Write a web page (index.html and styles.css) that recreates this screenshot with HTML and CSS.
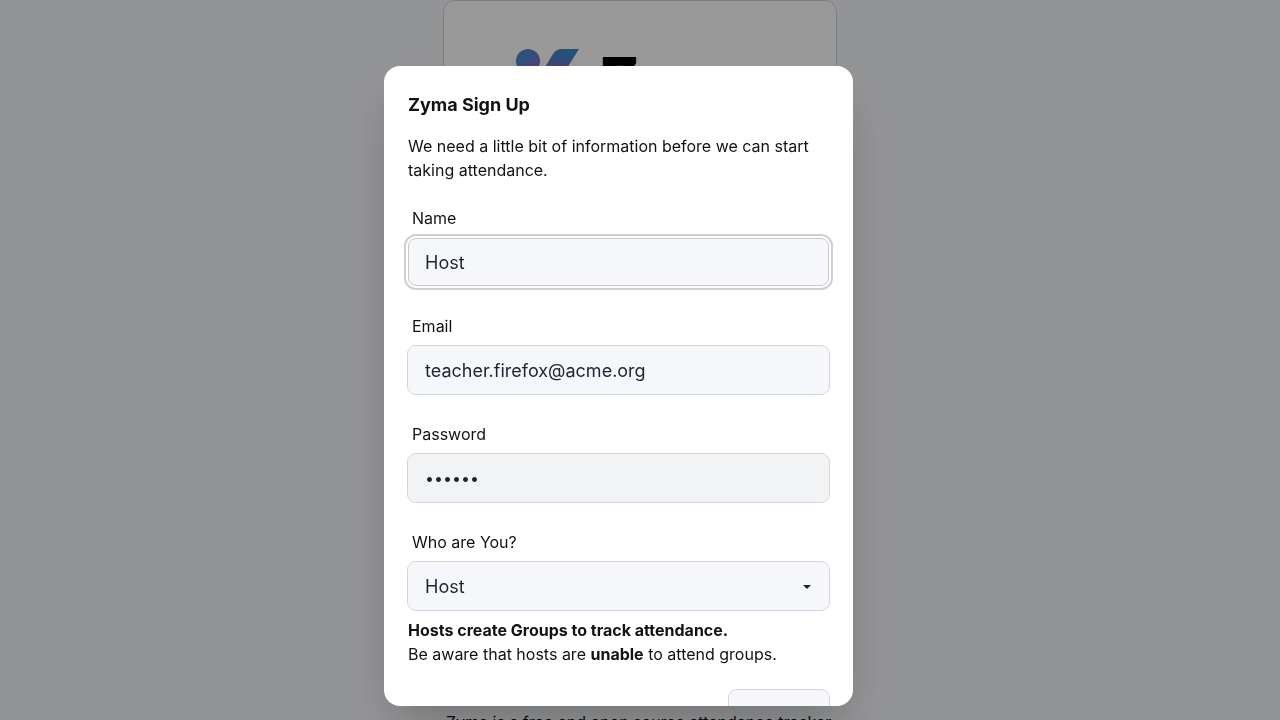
FILE: index.html
```html
<!DOCTYPE html>
<html lang="en">
<head>
<meta charset="utf-8">
<meta name="viewport" content="width=device-width, initial-scale=1">
<title>Zyma Sign Up</title>
<link rel="stylesheet" href="styles.css">
</head>
<body>
<main class="page">
  <section class="card">
    <div class="brand">
      <svg class="brand-mark" viewBox="0 0 64 64" aria-hidden="true">
        <defs>
          <linearGradient id="dot" x1="0" y1="0" x2="1" y2="1">
            <stop offset="0" stop-color="#2b98d8"/>
            <stop offset="1" stop-color="#9a62c0"/>
          </linearGradient>
          <linearGradient id="slash" x1="0" y1="0" x2="0" y2="1">
            <stop offset="0" stop-color="#2d90d2"/>
            <stop offset="0.5" stop-color="#8563b8"/>
            <stop offset="1" stop-color="#9a62c0"/>
          </linearGradient>
        </defs>
        <circle cx="12" cy="12" r="12" fill="url(#dot)"/>
        <path d="M46 0H63L36 43Q33 48 27 48H11L37 5Q40 0 46 0Z" fill="url(#slash)"/>
      </svg>
      <span class="brand-name">Zyma</span>
    </div>
  </section>
  <p class="tagline">Zyma is a free and open source attendance tracker</p>
</main>

<div class="overlay">
  <form class="modal" role="dialog" aria-modal="true" aria-labelledby="title">
    <h1 class="title" id="title">Zyma Sign Up</h1>
    <p class="intro">We need a little bit of information before we can start taking attendance.</p>
    <div class="fields">
      <div class="field">
        <label class="label" for="name">Name</label>
        <input class="input input-active" id="name" type="text" value="Host">
      </div>
      <div class="field">
        <label class="label" for="email">Email</label>
        <input class="input" id="email" type="email" value="teacher.firefox@acme.org">
      </div>
      <div class="field">
        <label class="label" for="password">Password</label>
        <input class="input input-filled" id="password" type="password" value="secret">
      </div>
      <div class="field">
        <label class="label" for="role">Who are You?</label>
        <div class="select-wrap">
          <select class="input select" id="role"><option>Host</option></select>
          <svg class="caret" viewBox="0 0 8 4" aria-hidden="true"><path d="M0 0H8L4 4Z" fill="#1f2430"/></svg>
        </div>
      </div>
    </div>
    <p class="hint"><strong>Hosts create Groups to track attendance.</strong><br>Be aware that hosts are <strong>unable</strong> to attend groups.</p>
    <div class="actions"><button class="button" type="button" aria-label="Sign Up"></button></div>
  </form>
</div>
</body>
</html>
```
FILE: styles.css
```css
* { box-sizing: border-box; }

body {
  margin: 0;
  height: 100vh;
  overflow: hidden;
  background: #f6f7fa;
  color: #111213;
  font: 16px/24px Inter, "Liberation Sans", sans-serif;
}

h1, p { margin: 0; }

.page {
  display: flex;
  flex-direction: column;
  align-items: center;
  gap: 10px;
}

.card {
  width: 100%;
  max-width: 394px;
  min-height: calc(100vh - 20px);
  padding: 48px 72px;
  background: #fff;
  border: 1px solid #ced5df;
  border-radius: 12px;
}

.brand {
  display: flex;
  align-items: flex-start;
  gap: 20px;
}

.brand-mark {
  flex: none;
  width: 64px;
  height: 64px;
}

.brand-name {
  color: #000;
  font-size: 56px;
  font-weight: 900;
  line-height: 58px;
}

.tagline {
  width: 100%;
  max-width: 388px;
  white-space: nowrap;
}

.overlay {
  position: fixed;
  inset: 0;
  display: flex;
  justify-content: center;
  padding: 66px 43px 14px 0;
  background: rgba(0, 0, 0, 0.4);
}

.modal {
  width: 100%;
  max-width: 469px;
  padding: 24px;
  overflow: hidden;
  background: #fff;
  border-radius: 16px;
  box-shadow: 0 24px 48px -12px rgba(0, 0, 0, 0.25);
}

.title {
  padding-top: 1px;
  font-size: 18px;
  line-height: 28px;
  font-weight: 700;
}

.intro { margin: 15px 0 16px; }

.fields {
  display: grid;
  gap: 20px;
}

.label {
  display: block;
  padding: 8px 4px;
}

.input {
  display: block;
  width: 100%;
  height: 48px;
  padding: 0 16px;
  border: 1px solid #f6f7fa;
  border-radius: 8px;
  outline: 1px solid #ced5df;
  background: #f6f7fa;
  color: #1f2430;
  font: inherit;
  font-size: 18px;
}

.input-active {
  border-color: #c8c9cb;
  outline: 2px solid #cfcfcf;
  outline-offset: 2px;
}

.input-filled {
  border-color: #f2f3f5;
  background: #f2f3f5;
  font-size: 16px;
}

.select-wrap { position: relative; }

.select {
  appearance: none;
  padding-top: 1px;
}

.caret {
  position: absolute;
  top: 23px;
  right: 18px;
  width: 8px;
  height: 4px;
  pointer-events: none;
}

.hint { margin-top: 8px; }

.actions {
  display: flex;
  justify-content: flex-end;
  margin-top: 24px;
}

.button {
  width: 100px;
  height: 48px;
  border: 0;
  border-radius: 8px;
  outline: 1px solid #ced5df;
  background: #f6f7fa;
}
```
